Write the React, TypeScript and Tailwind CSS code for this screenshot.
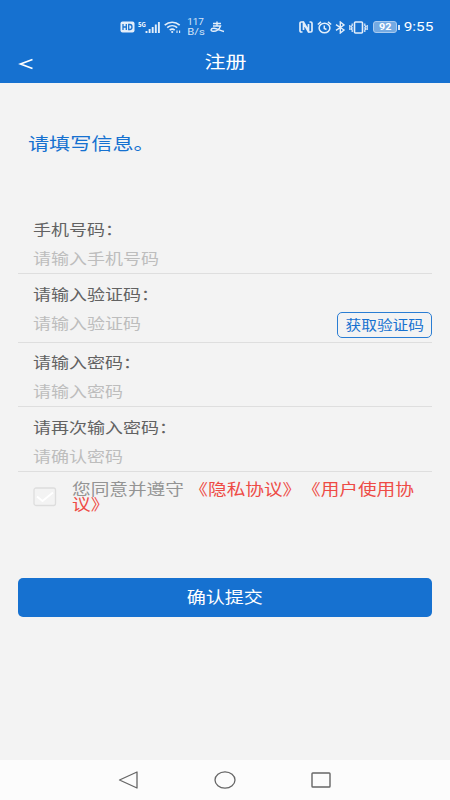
import React from "react";

const WIDE = "inline-block whitespace-nowrap scale-x-[1.2]";
const WIDE_LINE = "block w-fit whitespace-nowrap scale-x-[1.2] origin-left";

function StatusBar() {
  return (
    <div className="flex h-[44px] items-center justify-between pt-[10px] pr-[17px] pl-[120px] text-white">
      <div className="flex items-center">
        <svg width="15" height="12" viewBox="0 0 15 12">
          <rect x="0.5" y="0.5" width="14" height="11" rx="2" fill="#e3eefa" />
          <path d="M3 3v6M6.3 3v6M3 6h3.3M8.7 3.5v5h1.1c1.6 0 2.2-1 2.2-2.5s-.6-2.5-2.2-2.5z" fill="none" stroke="#1671d0" strokeWidth="1.3" />
        </svg>
        <div className="ml-[3px] flex w-[25px] items-start">
          <span className="-mr-px text-[6px] leading-[7px] font-bold">5G</span>
          <svg width="17" height="13" viewBox="0 0 17 13" className="shrink-0" fill="none" stroke="#e3eefa" strokeWidth="1.9">
            <path d="M1.5 12V10M4.6 12V8M7.7 12V6M10.8 12V3.5M13.9 12V1" />
          </svg>
        </div>
        <svg width="18" height="13" viewBox="0 0 18 13" className="ml-[1px]" fill="none" stroke="#e3eefa" strokeWidth="1.6">
          <path d="M.7 4.2c4.4-4 10.600-4 15 0M3.200 6.700c3-2.700 7-2.700 10 0M5.700 9.200c1.600-1.400 3.400-1.400 5 0" />
          <circle cx="8.200" cy="11" r="1.100" fill="#e3eefa" stroke="none" />
          <path d="M13 9.500v2.500M15.600 9.500v2.500" strokeWidth="1.100" />
        </svg>
        <div className="ml-[5px] flex w-[17px] flex-col items-center font-['Roboto',sans-serif] text-[9px] leading-[10px] text-[#d6e6f8]">
          <span className="inline-block scale-x-110">117</span>
          <span className="inline-block scale-x-125">B/s</span>
        </div>
        <svg width="15" height="12" viewBox="0 0 15 12" className="ml-[6px]" fill="none" stroke="#e3eefa" strokeWidth="1.400">
          <path d="M3 2.500h8M7 .5v4.500M3 5h7.500C9.500 8 6.500 10.500 3.200 10.300 0 10 .5 7 4 7.200c3.500.2 6 2.500 10 3.300" />
        </svg>
      </div>
      <div className="flex items-center">
        <svg width="14" height="12" viewBox="0 0 14 12" fill="none" stroke="#e3eefa" strokeWidth="1.700">
          <path d="M3.500 11H2.200Q1 11 1 9.800V2.200Q1 1 2.200 1h2.300l5 9V3M10.500 1h1.300Q13 1 13 2.200v7.600Q13 11 11.800 11H9.500l-5-9v7" />
        </svg>
        <svg width="15" height="13" viewBox="0 0 15 13" className="ml-[4px]" fill="none" stroke="#e3eefa" strokeWidth="1.500">
          <ellipse cx="7.500" cy="7" rx="5.400" ry="4.800" />
          <path d="M.8 3.500 4 .9M14.200 3.500 11 .9M7.300 4.500v3l2.200 1" />
        </svg>
        <svg width="11" height="13" viewBox="0 0 11 13" className="ml-[3px]" fill="none" stroke="#e3eefa" strokeWidth="1.400">
          <path d="m1 3.700 8 5.300-3.700 3V1L9 4 1 9.300" />
        </svg>
        <svg width="19" height="13" viewBox="0 0 19 13" className="ml-[3px]" fill="none" stroke="#e3eefa" strokeWidth="1.600">
          <rect x="5.500" y="1" width="8" height="11" rx="1" />
          <path d="M3.200 2.500v2l-1 1 1 1.500-1 1 1 1v2M.8 4v5M15.800 2.500v2l1 1-1 1.500 1 1-1 1v2M18.200 4v5" strokeWidth="1.200" />
        </svg>
        <div className="ml-[5px] flex h-[12px] w-[24px] items-center justify-center rounded-[3px] border border-[#a9cbef] bg-[#74aae3] font-['Roboto',sans-serif] text-[9px] leading-none font-bold">
          <span className="inline-block scale-x-120">92</span>
        </div>
        <div className="ml-px h-[5px] w-[2px] bg-[#d6e6f8]" />
        <span className="ml-[4px] flex w-[29px] justify-center font-['Roboto',sans-serif] text-[13px] leading-4">
          <span className="inline-block scale-x-[1.180]">9:55</span>
        </span>
      </div>
    </div>
  );
}

function Field({ label, hint, className, children }: { label: string; hint: string; className: string; children?: React.ReactNode }) {
  return (
    <div className={"relative flex flex-col border-b border-[#dedede] pl-[15px] text-[15px] " + className}>
      <label className="flex h-[30px] items-center text-[#626262]">
        <span className={WIDE + " origin-left"}>{label}</span>
      </label>
      <div className="flex h-[29px] items-center text-[#bdbdbd]">
        <span className={WIDE + " origin-left"}>{hint}</span>
      </div>
      {children}
    </div>
  );
}

function Agreement() {
  return (
    <div className="flex h-[106px] shrink-0 items-start pt-[9px] pl-[15px]">
      <svg width="24" height="20" viewBox="0 0 24 20" className="mt-[6px] shrink-0" fill="none">
        <rect x="1" y="1" width="21.500" height="17.500" rx="2" stroke="#dddddd" strokeWidth="1.300" />
        <path d="m4 9.500 5.500 4.500L20 5.500" stroke="#ffffff" strokeWidth="1.800" />
      </svg>
      <div className="ml-[15px] flex flex-col text-[15.550px] leading-[15px] text-[#949494]">
        <div className={WIDE_LINE}>
          您同意并遵守<span className="ml-[4.500px] text-[#ee4b45] [text-spacing-trim:space-all]">《隐私协议》</span>
          <span className="ml-[0.600px] text-[#ee4b45] [text-spacing-trim:space-all]">《用户使用协</span>
        </div>
        <div className={WIDE_LINE + " text-[#ee4b45]"}>议》</div>
      </div>
    </div>
  );
}

export default function App() {
  return (
    <div className="flex h-[800px] w-[450px] flex-col overflow-hidden bg-[#f3f3f3] font-['Noto_Sans_CJK_SC',sans-serif]">
      <header className="h-[83px] bg-[#1671d0]">
        <StatusBar />
        <div className="grid h-[34px] grid-cols-3 items-center text-white">
          <svg width="16" height="12" viewBox="0 0 16 12" className="mt-[5px] ml-[18px]" fill="none" stroke="white" strokeWidth="1.700">
            <path d="M14.500 1.500 2.500 6l12 4.500" />
          </svg>
          <h1 className="text-center text-[17.500px] leading-6">
            <span className={WIDE}>注册</span>
          </h1>
        </div>
      </header>
      <main className="flex flex-1 flex-col px-[18px]">
        <h2 className="mt-[47px] pl-[10px] text-[17.600px] leading-[26px] text-[#1671d0]">
          <span className={WIDE + " origin-left"}>请填写信息。</span>
        </h2>
        <div className="mt-[58px]">
          <Field label="手机号码：" hint="请输入手机号码" className="h-[60px]" />
          <Field label="请输入验证码：" hint="请输入验证码" className="h-[69px] pt-[5px]">
            <button className="absolute right-0 bottom-[4px] flex h-[26px] w-[95px] items-center justify-center rounded-[5px] border-[1.500px] border-[#2a7dd3] pb-px text-[13.100px] text-[#1671d0]">
              <span className={WIDE}>获取验证码</span>
            </button>
          </Field>
          <Field label="请输入密码：" hint="请输入密码" className="h-[64px] pt-[5px]" />
          <Field label="请再次输入密码：" hint="请确认密码" className="h-[65px] pt-[6px]" />
        </div>
        <Agreement />
        <button className="flex h-[39px] shrink-0 items-center justify-center rounded-[5px] bg-[#1671d0] pb-px text-[15.900px] text-white">
          <span className={WIDE}>确认提交</span>
        </button>
      </main>
      <nav className="flex h-[40px] items-center justify-between bg-[#fcfcfc] pr-[119px] pl-[118px]">
        <svg width="21" height="18" viewBox="0 0 21 18" fill="none" stroke="#666" strokeWidth="1.300" strokeLinejoin="round">
          <path d="M19 1v16L1.500 9z" />
        </svg>
        <svg width="22" height="18" viewBox="0 0 22 18" fill="none" stroke="#666" strokeWidth="1.300">
          <ellipse cx="11" cy="9" rx="10" ry="8.200" />
        </svg>
        <svg width="20" height="16" viewBox="0 0 20 16" fill="none" stroke="#666" strokeWidth="1.400">
          <rect x="1" y="1" width="18" height="14" rx="0.800" />
        </svg>
      </nav>
    </div>
  );
}
